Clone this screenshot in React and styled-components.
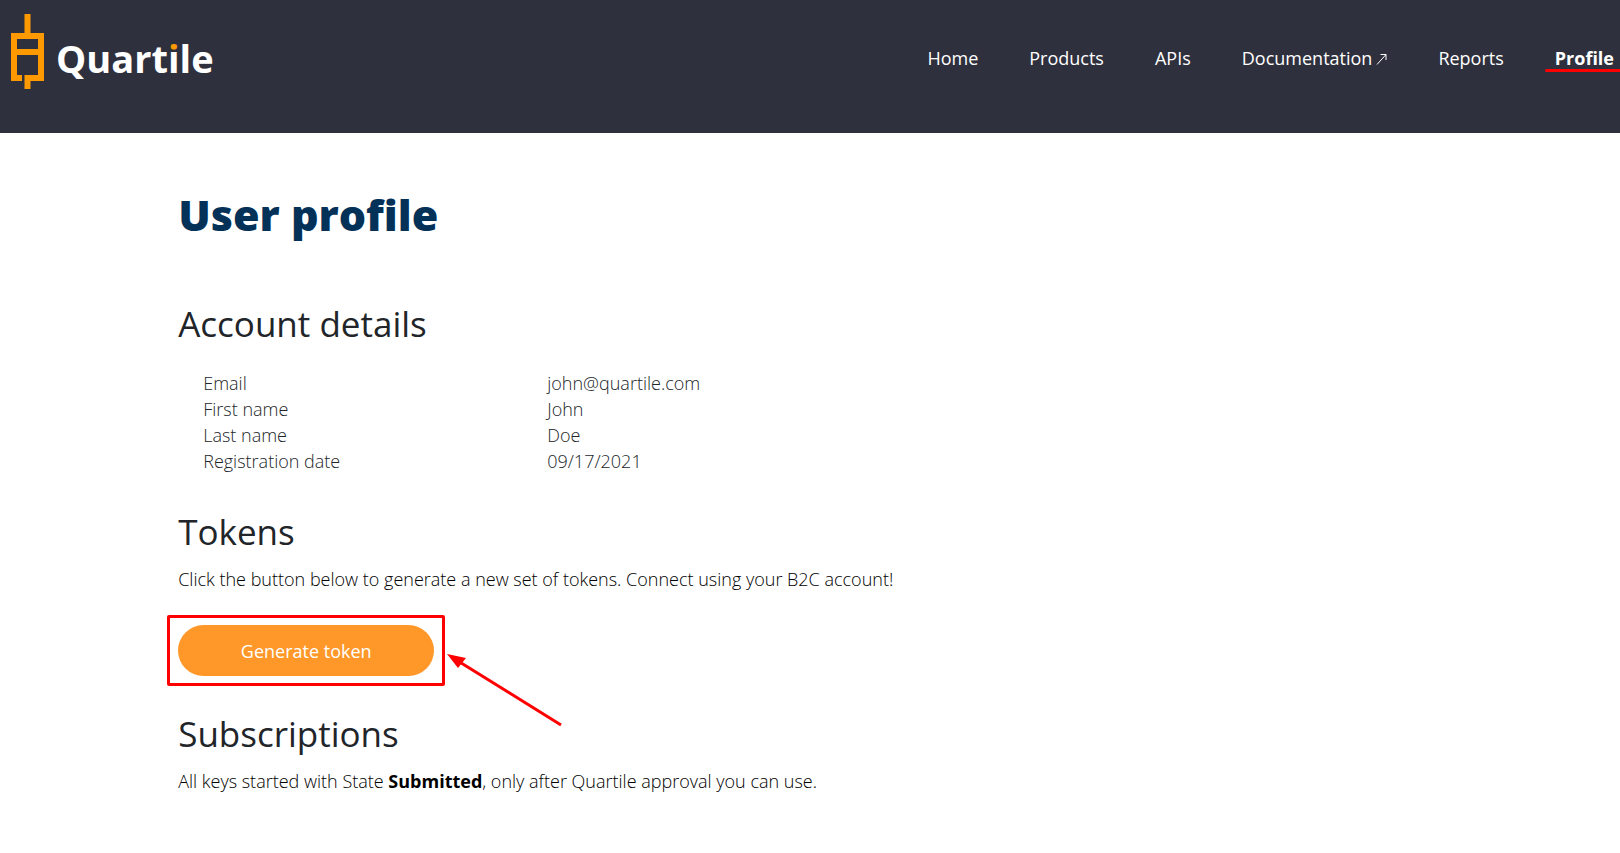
import React from "react";
import styled, { createGlobalStyle, css } from "styled-components";

const GlobalStyle = createGlobalStyle`
  *, *::before, *::after { box-sizing: border-box; }
  body {
    margin: 0;
    background: #fff;
    color: #000;
    font-family: "Open Sans", "Noto Sans", sans-serif;
    font-size: 18px;
    line-height: 26px;
    overflow-x: hidden;
  }
`;

const Header = styled.header`
  display: flex;
  align-items: flex-start;
  justify-content: space-between;
  height: 133px;
  padding: 12px 6px 0 10px;
  background: #2f303d;
`;

const LogoLink = styled.a`
  display: block;
`;

const Nav = styled.nav`
  display: flex;
  gap: 51px;
  padding-top: 33px;
`;

const NavLink = styled.a`
  position: relative;
  color: #fff;
  text-decoration: none;
  white-space: nowrap;
  ${(p) =>
    p.$active &&
    css`
      font-weight: 700;
      &::after {
        content: "";
        position: absolute;
        left: -10px;
        right: -8px;
        bottom: -1px;
        height: 3px;
        border-radius: 2px 0 0 2px;
        background: #f00;
      }
    `}
`;

const ArrowGlyph = styled.svg`
  margin-left: 4px;
`;

const Main = styled.main`
  padding: 52px 11% 20px;
`;

const Title = styled.h1`
  margin: 0 0 53px;
  color: #033158;
  font-size: 43px;
  line-height: 60px;
  font-weight: 800;
`;

const Section = styled.section`
  margin-bottom: 32px;
`;

const SectionTitle = styled.h2`
  margin: 0 0 8px;
  color: #212529;
  font-size: 35px;
  line-height: 52px;
  font-weight: 400;
`;

const Text = styled.p`
  margin: 0;
  font-weight: 300;
  strong { font-weight: 700; }
`;

const Details = styled.table`
  margin: 20px 0 0 25px;
  border-collapse: collapse;
  color: #212529;
  th, td {
    padding: 0;
    text-align: left;
    font-weight: 300;
  }
  th { width: 344px; }
`;

const Highlight = styled.div`
  position: relative;
  width: 278px;
  margin: 23px 0 -10px -11px;
  padding: 7px 8px;
  border: 3px solid #f00;
  border-radius: 2px;
`;

const GenerateButton = styled.button`
  display: block;
  width: 100%;
  height: 51px;
  border: 0;
  border-radius: 26px;
  background: #ff9829;
  color: #fff;
  font: inherit;
  cursor: pointer;
`;

const Pointer = styled.svg`
  position: absolute;
  left: 100%;
  top: 32px;
`;

const links = [
  { label: "Home" },
  { label: "Products" },
  { label: "APIs" },
  { label: "Documentation", external: true },
  { label: "Reports" },
  { label: "Profile", active: true },
];

const details = [
  ["Email", "john@quartile.com"],
  ["First name", "John"],
  ["Last name", "Doe"],
  ["Registration date", "09/17/2021"],
];

function Logo() {
  return (
    <svg width="206" height="80" viewBox="0 0 206 80" role="img" aria-label="Quartile">
      <defs>
        <linearGradient id="dotted-i" gradientUnits="userSpaceOnUse" x1="0" y1="0" x2="0" y2="80">
          <stop offset="0.485" stopColor="#ff9900" />
          <stop offset="0.485" stopColor="#fff" />
        </linearGradient>
      </defs>
      <path
        d="M17.5 2V24M1 24H34M1 40H31M4 21V69M31 21V69M1 66H12M34 66H14.5M17.5 63V77"
        fill="none"
        stroke="#ff9900"
        strokeWidth="6"
      />
      <text x="46" y="61" fill="#fff" fontFamily="Open Sans, sans-serif" fontWeight="700" fontSize="38">
        Quart<tspan fill="url(#dotted-i)">i</tspan>le
      </text>
    </svg>
  );
}

export default function App() {
  return (
    <>
      <GlobalStyle />
      <Header>
        <LogoLink href="#home">
          <Logo />
        </LogoLink>
        <Nav aria-label="Main">
          {links.map((l) => (
            <NavLink
              key={l.label}
              href={`#${l.label.toLowerCase()}`}
              $active={l.active}
              aria-current={l.active ? "page" : undefined}
            >
              {l.label}
              {l.external && (
                <ArrowGlyph width="11" height="12" viewBox="0 0 11 12" fill="none" stroke="#fff" aria-hidden="true">
                  <path d="M1 11.5L10 1.5M4.5 1.5H10V7" />
                </ArrowGlyph>
              )}
            </NavLink>
          ))}
        </Nav>
      </Header>
      <Main>
        <Title>User profile</Title>
        <Section>
          <SectionTitle>Account details</SectionTitle>
          <Details>
            <tbody>
              {details.map(([name, value]) => (
                <tr key={name}>
                  <th scope="row">{name}</th>
                  <td>{value}</td>
                </tr>
              ))}
            </tbody>
          </Details>
        </Section>
        <Section>
          <SectionTitle>Tokens</SectionTitle>
          <Text>Click the button below to generate a new set of tokens. Connect using your B2C account!</Text>
          <Highlight>
            <GenerateButton type="button">Generate token</GenerateButton>
            <Pointer width="124" height="78" viewBox="0 0 124 78" aria-hidden="true">
              <path d="M16 11L119 75" fill="none" stroke="#f00" strokeWidth="3" />
              <path d="M5 4L24 8L16 18Z" fill="#f00" />
            </Pointer>
          </Highlight>
        </Section>
        <Section>
          <SectionTitle>Subscriptions</SectionTitle>
          <Text>
            All keys started with State <strong>Submitted</strong>, only after Quartile approval you can use.
          </Text>
        </Section>
      </Main>
    </>
  );
}
